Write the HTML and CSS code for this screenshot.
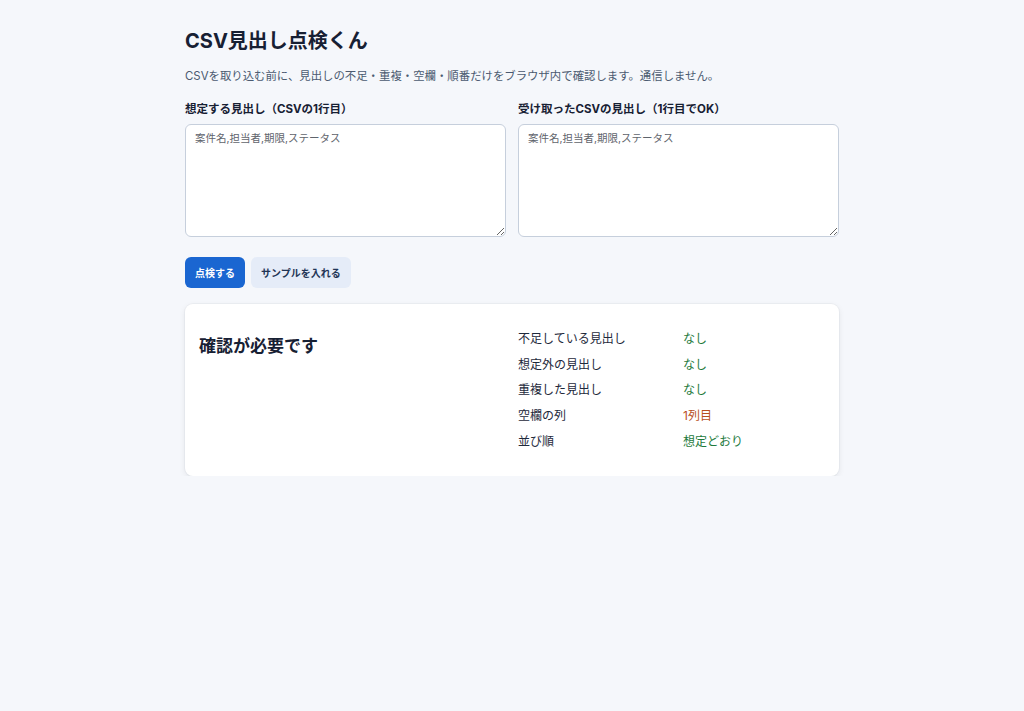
FILE: index.html
```html
<!DOCTYPE html>
<html lang="ja">
<head>
<meta charset="utf-8">
<title>CSV見出し点検くん</title>
<link rel="stylesheet" href="styles.css">
</head>
<body>
<main class="page">
  <h1 class="title">CSV見出し点検くん</h1>
  <p class="lead">CSVを取り込む前に、見出しの不足・重複・空欄・順番だけをブラウザ内で確認します。通信しません。</p>
  <div class="inputs">
    <label class="field">
      <span class="field-label">想定する見出し（CSVの1行目）</span>
      <textarea class="area" placeholder="案件名,担当者,期限,ステータス"></textarea>
    </label>
    <label class="field">
      <span class="field-label">受け取ったCSVの見出し（1行目でOK）</span>
      <textarea class="area" placeholder="案件名,担当者,期限,ステータス"></textarea>
    </label>
  </div>
  <div class="actions">
    <button class="btn btn-primary" type="button">点検する</button>
    <button class="btn btn-secondary" type="button">サンプルを入れる</button>
  </div>
  <section class="result">
    <h2 class="result-title">確認が必要です</h2>
    <dl class="checks">
      <dt>不足している見出し</dt><dd class="ok">なし</dd>
      <dt>想定外の見出し</dt><dd class="ok">なし</dd>
      <dt>重複した見出し</dt><dd class="ok">なし</dd>
      <dt>空欄の列</dt><dd class="warn">1列目</dd>
      <dt>並び順</dt><dd class="ok">想定どおり</dd>
    </dl>
  </section>
</main>
</body>
</html>
```

FILE: styles.css
```css
* { box-sizing: border-box; }
html, body {
  margin: 0;
  background: #f5f7fb;
  color: #1e293b;
  font-family: Inter, "Noto Sans CJK JP", "Liberation Sans", sans-serif;
}
.page {
  width: 654px;
  margin: 0 auto;
  padding-top: 28px;
}
.title {
  margin: 0;
  font-size: 20px;
  line-height: 26px;
  font-weight: 700;
  color: #172033;
}
.lead {
  margin: 14px 0 0;
  font-size: 11.4px;
  line-height: 16px;
  color: #4b5a70;
}
.inputs {
  display: grid;
  grid-template-columns: 1fr 1fr;
  gap: 12px;
  margin-top: 17px;
}
.field {
  display: flex;
  flex-direction: column;
  gap: 7px;
}
.field-label {
  font-size: 11.5px;
  line-height: 16px;
  font-weight: 700;
  color: #172033;
}
.area {
  height: 113px;
  resize: vertical;
  border: 1px solid #c6cfdc;
  border-radius: 6px;
  background: #fff;
  padding: 7px 9px;
  font-family: inherit;
  font-size: 10.5px;
  line-height: 14px;
  color: #1e293b;
}
.area::placeholder { color: #5f646c; }
.actions {
  display: flex;
  gap: 6px;
  margin-top: 20px;
}
.btn {
  height: 31px;
  border: 0;
  border-radius: 6px;
  padding: 0 10px;
  font-family: inherit;
  font-size: 10px;
  font-weight: 700;
}
.btn-primary {
  background: #1a66d1;
  color: #fff;
}
.btn-secondary {
  background: #e5ecf8;
  color: #1f3556;
}
.result {
  display: grid;
  grid-template-columns: 1fr 1fr;
  gap: 12px;
  margin-top: 16px;
  padding: 27px 14px 26px;
  background: #fff;
  border-radius: 8px;
  box-shadow: 0 2px 6px rgba(15, 23, 42, 0.08), 0 0 0 1px rgba(15, 23, 42, 0.03);
}
.result-title {
  margin: 3px 0 0;
  font-size: 17px;
  line-height: 24px;
  font-weight: 700;
  color: #172033;
}
.checks {
  margin: 0;
  display: grid;
  grid-template-columns: 165px 1fr;
  row-gap: 9.7px;
  font-size: 12px;
  line-height: 16px;
}
.checks dt { color: #1e293b; }
.checks dd { margin: 0; }
.ok { color: #1e7a3c; }
.warn { color: #b8501c; }
```
